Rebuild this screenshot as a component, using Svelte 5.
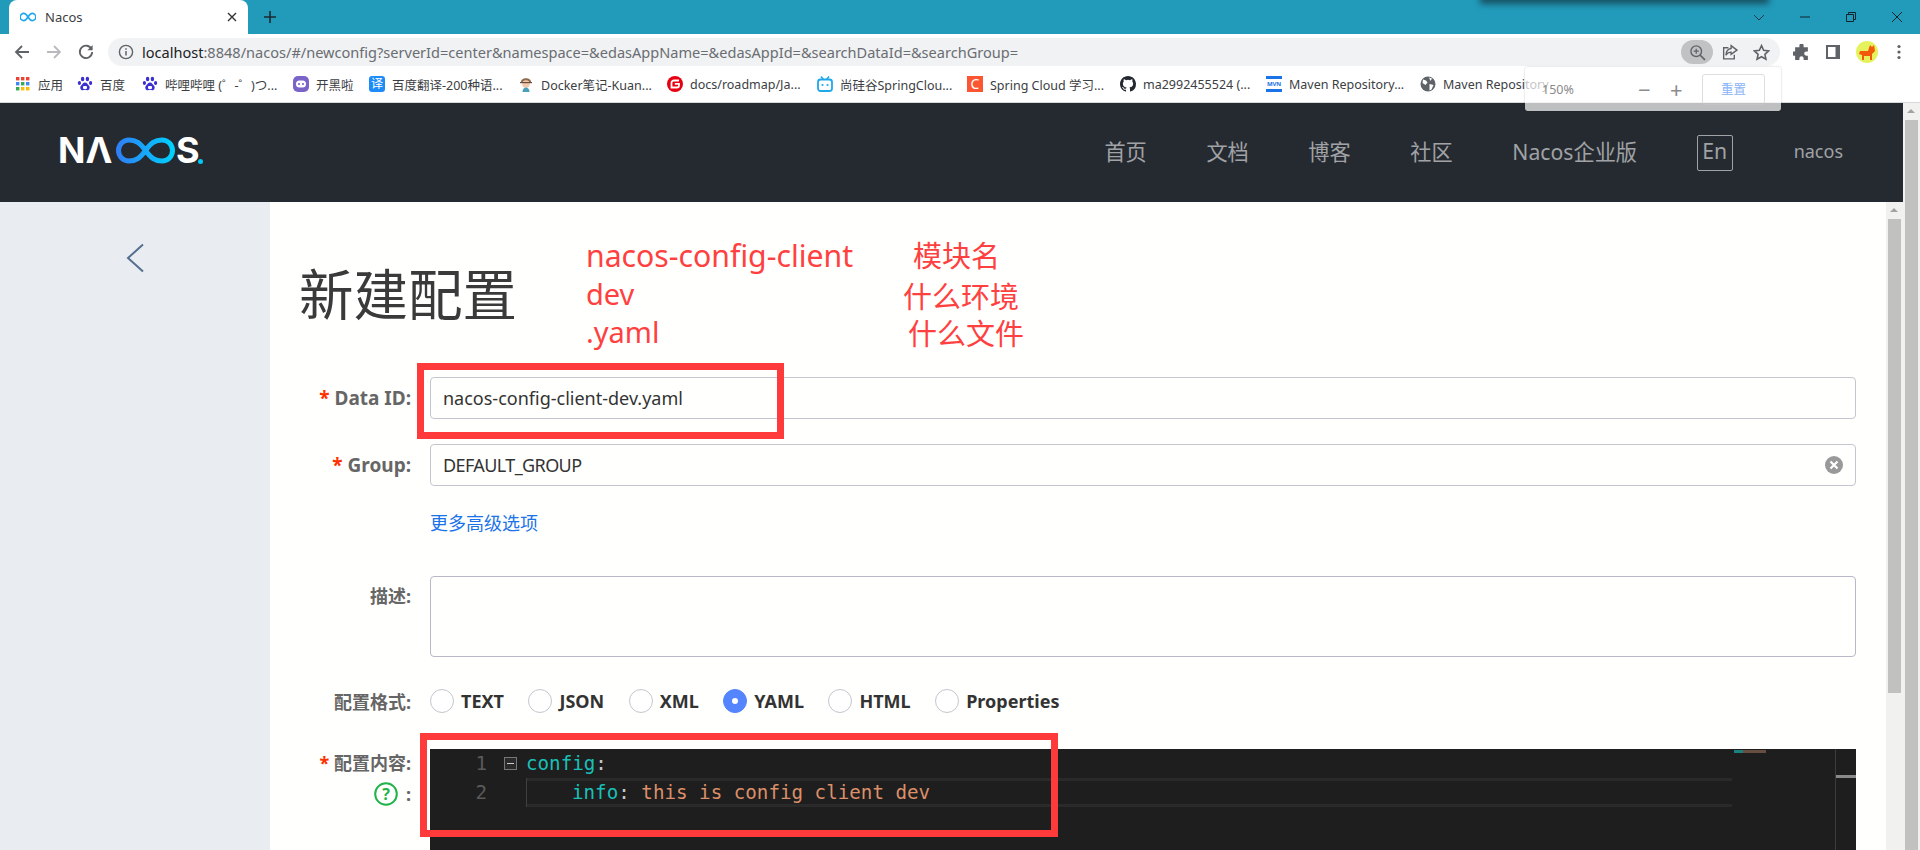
<script lang="ts">
  // bookmark bar, widths come from the truncated labels chrome shows
  const bookmarks = [
    { icon: 'apps', label: '应用', w: 62 },
    { icon: 'paw', label: '百度', w: 65 },
    { icon: 'paw', label: '哔哩哔哩 (゜-゜)つ...', w: 151 },
    { icon: 'kook', label: '开黑啦', w: 76 },
    { icon: 'fanyi', label: '百度翻译-200种语...', w: 149 },
    { icon: 'docker', label: 'Docker笔记-Kuan...', w: 149 },
    { icon: 'gitee', label: 'docs/roadmap/Ja...', w: 150 },
    { icon: 'bili', label: '尚硅谷SpringClou...', w: 150 },
    { icon: 'csdn', label: 'Spring Cloud 学习...', w: 153 },
    { icon: 'github', label: 'ma2992455524 (...', w: 146 },
    { icon: 'mvn', label: 'Maven Repository...', w: 154 },
    { icon: 'globe', label: 'Maven Repository', w: 140 },
  ]
  const nav = ['首页', '文档', '博客', '社区', 'Nacos企业版']
  const formats = ['TEXT', 'JSON', 'XML', 'YAML', 'HTML', 'Properties']
</script>

<div class="screen">
  <div class="tabstrip">
    <div class="tab">
      <svg class="tab-icon" viewBox="0 0 16 10" width="16" height="10">
        <path d="M8 5C6.5 2.6 5.4 1.4 3.8 1.4a3.6 3.6 0 0 0 0 7.2C5.4 8.6 6.5 7.4 8 5c1.5-2.4 2.6-3.6 4.2-3.6a3.6 3.6 0 0 1 0 7.2C10.6 8.6 9.5 7.4 8 5z" fill="none" stroke="#20a8ee" stroke-width="1.6" />
      </svg>
      <span class="tab-title">Nacos</span>
      <svg class="tab-close" viewBox="0 0 10 10" width="10" height="10">
        <path d="M1 1l8 8M9 1l-8 8" stroke="#333" stroke-width="1.4" />
      </svg>
    </div>
    <svg class="new-tab" viewBox="0 0 14 14" width="14" height="14">
      <path d="M7 1v12M1 7h12" stroke="#1c2a30" stroke-width="1.6" />
    </svg>
    <div class="win-controls">
      <svg viewBox="0 0 12 12" width="12" height="12"><path d="M1 4l5 5 5-5" fill="none" stroke="#1d3a45" stroke-width="1" /></svg>
      <svg viewBox="0 0 12 12" width="12" height="12"><path d="M1 6h10" stroke="#10242c" stroke-width="1" /></svg>
      <svg viewBox="0 0 12 12" width="12" height="12"><path d="M1.5 3.5h7v7h-7zM3.5 3.5v-2h7v7h-2" fill="none" stroke="#10242c" stroke-width="1" /></svg>
      <svg viewBox="0 0 12 12" width="12" height="12"><path d="M1 1l10 10M11 1L1 11" stroke="#10242c" stroke-width="1" /></svg>
    </div>
  </div>

  <div class="toolbar">
    <svg class="tool" viewBox="0 0 16 16" width="16" height="16"><path d="M15 8H2M8 2L2 8l6 6" fill="none" stroke="#5f6368" stroke-width="1.8" /></svg>
    <svg class="tool" viewBox="0 0 16 16" width="16" height="16"><path d="M1 8h13M8 2l6 6-6 6" fill="none" stroke="#b8babd" stroke-width="1.8" /></svg>
    <svg class="tool" viewBox="0 0 16 16" width="16" height="16"><path d="M13.6 5.2A6.2 6.2 0 1 0 14.2 8" fill="none" stroke="#5f6368" stroke-width="1.8" /><path d="M14.6 1v5.2H9.4z" fill="#5f6368" /></svg>
    <div class="omnibox">
      <svg class="info" viewBox="0 0 16 16" width="16" height="16"><circle cx="8" cy="8" r="6.6" fill="none" stroke="#5f6368" stroke-width="1.4" /><path d="M8 7v4.6M8 4.2v1.5" stroke="#5f6368" stroke-width="1.5" /></svg>
      <span class="url"><b>localhost</b>:8848/nacos/#/newconfig?serverId=center&amp;namespace=&amp;edasAppName=&amp;edasAppId=&amp;searchDataId=&amp;searchGroup=</span>
      <div class="omni-actions">
        <span class="zoom-btn">
          <svg viewBox="0 0 16 16" width="17" height="17"><circle cx="6.8" cy="6.8" r="5" fill="none" stroke="#5f6368" stroke-width="1.3" /><path d="M10.6 10.6L15 15" stroke="#5f6368" stroke-width="1.6" /><path d="M6.8 4.4v4.8M4.4 6.8h4.8" stroke="#5f6368" stroke-width="1.2" /></svg>
        </span>
        <svg viewBox="0 0 16 16" width="17" height="17"><path d="M7 3.5H2.5v10.5h10V10" fill="none" stroke="#5f6368" stroke-width="1.3" /><path d="M9.5 1.5L15 5.8l-5.5 4V7.6C7.3 7.6 5.6 8.6 4.6 10.6c.2-3.6 2-6 4.9-6.4z" fill="none" stroke="#5f6368" stroke-width="1.3" /></svg>
        <svg viewBox="0 0 16 16" width="17" height="17"><path d="M8 1.6l2 4.4 4.7.5-3.5 3.2 1 4.7L8 12l-4.2 2.4 1-4.7-3.5-3.2L6 6z" fill="none" stroke="#5f6368" stroke-width="1.5" /></svg>
      </div>
    </div>
    <div class="browser-actions">
      <svg viewBox="0 0 16 16" width="17" height="17"><path d="M6 1.5a2 2 0 0 1 4 0V3h4v4h-1.500a2 2 0 0 0 0 4H14v4h-4v-1.500a2 2 0 0 0-4 0V15H2v-4H.8a2 2 0 0 1 0-4H2V3h4z" fill="#5f6368" /></svg>
      <svg viewBox="0 0 16 16" width="16" height="16"><rect x="1" y="1" width="14" height="14" fill="#5f6368" /><rect x="3" y="3" width="7.500" height="10" fill="#fff" /></svg>
      <span class="avatar">
        <svg viewBox="0 0 22 22" width="22" height="22"><path d="M4 10h8l2-6 2 2 2-2 1 6-3 3v6h-2v-4H8v4H6v-5L3 13z" fill="#f05a0a" /></svg>
      </span>
      <svg class="menu-dots" viewBox="0 0 4 16" width="4" height="16"><circle cx="2" cy="2.500" r="1.600" fill="#5f6368" /><circle cx="2" cy="8" r="1.600" fill="#5f6368" /><circle cx="2" cy="13.500" r="1.600" fill="#5f6368" /></svg>
    </div>
  </div>

  <div class="bookmarks">
    {#each bookmarks as b}
      <div class="bookmark" style="width: {b.w}px">
        <span class="bm-icon">
          {#if b.icon === 'apps'}
            <svg viewBox="0 0 14 14" width="14" height="14">
              <rect x="0" y="0" width="3.400" height="3.400" fill="#ea4335" /><rect x="5" y="0" width="3.400" height="3.400" fill="#ea4335" /><rect x="10" y="0" width="3.400" height="3.400" fill="#ea4335" />
              <rect x="0" y="5" width="3.400" height="3.400" fill="#4285f4" /><rect x="5" y="5" width="3.400" height="3.400" fill="#34a853" /><rect x="10" y="5" width="3.400" height="3.400" fill="#4285f4" />
              <rect x="0" y="10" width="3.400" height="3.400" fill="#34a853" /><rect x="5" y="10" width="3.400" height="3.400" fill="#fbbc05" /><rect x="10" y="10" width="3.400" height="3.400" fill="#fbbc05" />
            </svg>
          {:else if b.icon === 'paw'}
            <svg viewBox="0 0 16 16" width="16" height="16">
              <ellipse cx="5.600" cy="3" rx="1.700" ry="2.300" fill="#3b2fd0" /><ellipse cx="10.400" cy="3" rx="1.700" ry="2.300" fill="#3b2fd0" />
              <ellipse cx="2.400" cy="7" rx="1.600" ry="2" fill="#3b2fd0" /><ellipse cx="13.600" cy="7" rx="1.600" ry="2" fill="#3b2fd0" />
              <path d="M8 6.500c2 0 2.800 2 4 3.200 1.400 1.500.6 4.800-2 4.500-1-.1-1.400-.4-2-.4s-1 .3-2 .4c-2.600.3-3.400-3-2-4.500C5.200 8.500 6 6.500 8 6.500z" fill="#3b2fd0" />
              <rect x="6" y="10" width="4" height="3" rx="1" fill="#fff" />
            </svg>
          {:else if b.icon === 'kook'}
            <svg viewBox="0 0 16 16" width="16" height="16"><rect width="16" height="16" rx="5" fill="#7a64c8" /><rect x="3" y="4.500" width="10" height="7" rx="3.500" fill="#fff" /><circle cx="6" cy="8" r="1.100" fill="#7a64c8" /><circle cx="10" cy="8" r="1.100" fill="#7a64c8" /></svg>
          {:else if b.icon === 'fanyi'}
            <span class="bm-fanyi">译</span>
          {:else if b.icon === 'docker'}
            <svg viewBox="0 0 16 16" width="16" height="16"><path d="M3 6c0-5 10-5 10 0z" fill="#8a6a50" /><circle cx="8" cy="8" r="3.800" fill="#f2c8a8" /><path d="M4.500 16c0-3 1.500-4.500 3.500-4.500s3.500 1.500 3.500 4.500z" fill="#4aa0b8" /><path d="M2 6h12v1.200H2z" fill="#6a4c38" /></svg>
          {:else if b.icon === 'gitee'}
            <svg viewBox="0 0 16 16" width="16" height="16"><circle cx="8" cy="8" r="8" fill="#e60012" /><path d="M12 4.500H7a2.500 2.500 0 0 0-2.500 2.500v4.500H10a2 2 0 0 0 2-2V7.800H7.800" fill="none" stroke="#fff" stroke-width="1.800" /></svg>
          {:else if b.icon === 'bili'}
            <svg viewBox="0 0 16 16" width="16" height="16"><rect x="1" y="3.500" width="14" height="11.500" rx="2.500" fill="none" stroke="#20a8e8" stroke-width="1.800" /><path d="M4 0.500l2.500 3M12 0.500l-2.500 3" stroke="#20a8e8" stroke-width="1.600" /><circle cx="5.500" cy="9" r="1.100" fill="#20a8e8" /><circle cx="10.500" cy="9" r="1.100" fill="#20a8e8" /></svg>
          {:else if b.icon === 'csdn'}
            <span class="bm-csdn">C</span>
          {:else if b.icon === 'github'}
            <svg viewBox="0 0 16 16" width="16" height="16"><path fill="#24292f" d="M8 0C3.580 0 0 3.580 0 8c0 3.540 2.290 6.530 5.470 7.590.4.070.55-.17.55-.38 0-.19-.01-.82-.01-1.490-2.010.37-2.530-.49-2.690-.94-.09-.23-.48-.94-.82-1.130-.28-.15-.68-.52-.01-.53.63-.01 1.080.58 1.230.82.720 1.210 1.870.87 2.330.66.070-.52.280-.87.510-1.070-1.780-.2-3.640-.89-3.640-3.950 0-.87.310-1.590.82-2.150-.08-.2-.36-1.020.08-2.120 0 0 .67-.21 2.200.82a7.420 7.420 0 0 1 4 0c1.530-1.040 2.200-.82 2.200-.82.440 1.100.16 1.920.08 2.120.51.560.82 1.270.82 2.150 0 3.070-1.870 3.750-3.650 3.950.29.250.54.730.54 1.480 0 1.070-.01 1.930-.01 2.200 0 .21.150.46.550.38A8.010 8.010 0 0 0 16 8c0-4.420-3.580-8-8-8z" /></svg>
          {:else if b.icon === 'mvn'}
            <span class="bm-mvn">MVN</span>
          {:else}
            <svg viewBox="0 0 16 16" width="16" height="16"><circle cx="8" cy="8" r="7.500" fill="#5f6368" /><path d="M3 3.500l3 1 1.500 2-2 2.500-3-2zM9 1.500l3 1-1.500 2.500zM9.500 8l4 1-2 4.500-2 1z" fill="#fff" /></svg>
          {/if}
        </span>
        <span class="bm-label">{b.label}</span>
      </div>
    {/each}
  </div>

  <div class="viewport">
    <div class="page">
      <header class="site-header">
        <div class="logo">
          <span class="logo-text">NΛ</span>
          <svg class="logo-loop" viewBox="0 0 63 27" width="63" height="27">
            <defs>
              <linearGradient id="loopgrad" x1="0" x2="1" y1="0" y2="0">
                <stop offset="0" stop-color="#2e80f5" />
                <stop offset="1" stop-color="#00d0ff" />
              </linearGradient>
            </defs>
            <path d="M31.500 13.500C26 6 22 3 15 3a10.500 10.500 0 0 0 0 21c7 0 11-3 16.500-10.500C37 6 41 3 48 3a10.500 10.500 0 0 1 0 21c-7 0-11-3-16.500-10.500z" fill="none" stroke="url(#loopgrad)" stroke-width="5" />
          </svg>
          <span class="logo-text logo-s">S</span><span class="logo-dot"></span>
        </div>
        <nav class="site-nav">
          {#each nav as item}
            <span class="nav-item">{item}</span>
          {/each}
          <span class="lang">En</span>
          <span class="user">nacos</span>
        </nav>
      </header>

      <div class="body-row">
        <aside class="sidebar">
          <svg viewBox="0 0 18 30" width="18" height="30"><path d="M17 1.500L2 15l15 13.500" fill="none" stroke="#546f8f" stroke-width="2" /></svg>
        </aside>

        <main class="content">
          <h1>新建配置</h1>
          <form class="form" on:submit|preventDefault>
            <div class="row row--input">
              <span class="label label--latin"><i>*</i> Data ID:</span>
              <div class="input">nacos-config-client-dev.yaml</div>
            </div>
            <div class="row row--input">
              <span class="label label--latin"><i>*</i> Group:</span>
              <div class="input">
                <span class="group-value">DEFAULT_GROUP</span>
                <svg class="clear" viewBox="0 0 18 18" width="18" height="18"><circle cx="9" cy="9" r="9" fill="#999" /><path d="M5.500 5.500l7 7M12.500 5.500l-7 7" stroke="#fff" stroke-width="2.200" /></svg>
              </div>
            </div>
            <div class="row row--more">
              <span class="label"></span>
              <span class="more-link">更多高级选项</span>
            </div>
            <div class="row row--desc">
              <span class="label">描述:</span>
              <div class="textarea"></div>
            </div>
            <div class="row row--format">
              <span class="label">配置格式:</span>
              <div class="radios">
                {#each formats as f}
                  <span class="radio-item">
                    <span class="radio" class:radio--on={f === 'YAML'}></span>
                    <span class="radio-text">{f}</span>
                  </span>
                {/each}
              </div>
            </div>
            <div class="row row--editor">
              <div class="label label--stack">
                <span><i>*</i> 配置内容:</span>
                <span class="help">
                  <svg viewBox="0 0 24 24" width="24" height="24"><circle cx="12" cy="12" r="10.800" fill="none" stroke="#1fb34a" stroke-width="2" /><text x="12" y="17.500" text-anchor="middle" class="help-q">?</text></svg>
                  :
                </span>
              </div>
              <div class="editor">
                <div class="gutter">
                  <div class="gutter-line"><span class="ln">1</span><span class="fold"></span></div>
                  <div class="gutter-line"><span class="ln">2</span></div>
                </div>
                <div class="code">
                  <div class="code-line"><span class="key">config</span><span class="punc">:</span></div>
                  <div class="code-line code-line--second"><span class="guide"></span><span class="key">info</span><span class="punc">:</span> <span class="val">this is config client dev</span></div>
                </div>
                <div class="minimap">
                  <span class="mini-slider"></span>
                </div>
              </div>
            </div>
          </form>
        </main>

        <div class="scrollbar scrollbar--inner">
          <span class="sb-arrow"></span>
          <span class="sb-thumb"></span>
        </div>
      </div>
    </div>

    <div class="scrollbar scrollbar--outer">
      <span class="sb-arrow"></span>
      <span class="sb-thumb sb-thumb--outer"></span>
    </div>
  </div>

  <!-- things lying on top of the page -->
  <div class="top-shadow"></div>
  <div class="zoom-popup">
    <span class="zoom-value">150%</span>
    <span class="zoom-sign zoom-minus">−</span>
    <span class="zoom-sign zoom-plus">+</span>
    <span class="zoom-reset">重置</span>
  </div>

  <div class="note note--left"><span class="note-first">nacos-config-client</span><br />dev<br />.yaml</div>
  <div class="note note--a">模块名</div>
  <div class="note note--b">什么环境</div>
  <div class="note note--c">什么文件</div>
  <div class="mark mark--id"></div>
  <div class="mark mark--code"></div>
  <div class="mini-text"></div>
</div>

<style>
  :global(body) {
    margin: 0;
    overflow: hidden;
  }
  .screen {
    position: relative;
    width: 1920px;
    height: 850px;
    overflow: hidden;
    font-family: 'Noto Sans', 'Noto Sans CJK SC', sans-serif;
    background: #fff;
  }
  .tabstrip {
    height: 34px;
    background: #229bbb;
    display: flex;
    align-items: flex-end;
    padding-left: 9px;
    position: relative;
  }
  .tab {
    width: 239px;
    height: 34px;
    box-sizing: border-box;
    background: #fff;
    border-radius: 8px 8px 0 0;
    display: flex;
    align-items: center;
    padding: 0 11px;
  }
  .tab-icon {
    margin-right: 9px;
  }
  .tab-title {
    font-size: 13px;
    color: #3c4043;
    flex: 1;
  }
  .new-tab {
    margin: 0 0 10px 15px;
  }
  .win-controls {
    margin-left: auto;
    display: flex;
    gap: 34px;
    align-self: center;
    padding-right: 17px;
  }
  .win-controls svg {
    display: block;
  }
  .toolbar {
    height: 32px;
    padding: 4px 0 0 14px;
    display: flex;
    align-items: center;
    gap: 16px;
    box-sizing: border-box;
    background: #fff;
  }
  .tool {
    flex: none;
  }
  .omnibox {
    margin-left: -2px;
    width: 1672px;
    flex: none;
    height: 28px;
    box-sizing: border-box;
    background: #f0f2f4;
    border-radius: 14px;
    display: flex;
    align-items: center;
    padding: 0 2px 0 10px;
  }
  .info {
    margin-right: 8px;
    flex: none;
  }
  .url {
    font-size: 14.560px;
    color: #6a6d71;
    white-space: nowrap;
    flex: 1;
  }
  .url b {
    font-weight: 400;
    color: #202124;
  }
  .omni-actions {
    display: flex;
    align-items: center;
    gap: 15px;
    padding-right: 8px;
  }
  .zoom-btn {
    width: 32px;
    height: 24px;
    border-radius: 12px;
    background: #c1c2c3;
    display: flex;
    align-items: center;
    justify-content: center;
    margin-right: -7px;
  }
  .browser-actions {
    display: flex;
    align-items: center;
    gap: 15px;
    margin-left: -3px;
  }
  .menu-dots {
    margin-left: 4px;
  }
  .avatar {
    width: 22px;
    height: 22px;
    border-radius: 50%;
    background: #e6f25c;
    display: block;
  }
  .avatar svg {
    display: block;
  }
  .browser-actions svg {
    flex: none;
  }
  .bookmarks {
    height: 36px;
    border-bottom: 1px solid #d6d7d8;
    box-sizing: content-box;
    display: flex;
    align-items: center;
    padding-left: 15px;
    background: #fff;
  }
  .bookmark {
    display: flex;
    align-items: center;
    gap: 7px;
    flex: none;
    white-space: nowrap;
  }
  .bm-icon {
    width: 16px;
    height: 16px;
    flex: none;
    display: flex;
    align-items: center;
    justify-content: center;
  }
  .bm-label {
    font-size: 12.500px;
    color: #3c4043;
  }
  .bm-fanyi {
    width: 16px;
    height: 16px;
    border-radius: 3px;
    background: #1d8cf8;
    color: #fff;
    font-size: 12px;
    line-height: 16px;
    text-align: center;
  }
  .bm-csdn {
    width: 16px;
    height: 16px;
    background: #fc5531;
    color: #fff;
    font-size: 14px;
    line-height: 16px;
    text-align: center;
  }
  .bm-mvn {
    width: 16px;
    height: 16px;
    box-sizing: border-box;
    border-top: 3px solid #1a73e8;
    border-bottom: 3px solid #1a73e8;
    color: #1a73e8;
    font-size: 6px;
    font-weight: 700;
    line-height: 10px;
    text-align: center;
    letter-spacing: -0.2px;
  }

  .viewport {
    display: flex;
    height: 747px;
  }
  .page {
    width: 1903px;
    flex: none;
    display: flex;
    flex-direction: column;
  }
  .site-header {
    height: 99px;
    flex: none;
    background: #252a31;
    display: flex;
    align-items: center;
    justify-content: space-between;
    padding: 0 60px;
    box-sizing: border-box;
  }
  .logo {
    display: flex;
    align-items: center;
    color: #fff;
    height: 27px;
    margin-bottom: 5px;
    margin-left: -2px;
  }
  .logo-text {
    font-family: Inter, 'Noto Sans', sans-serif;
    font-size: 36px;
    font-weight: 700;
    line-height: 27px;
    width: 56px;
    white-space: nowrap;
  }
  .logo-s {
    width: 22px;
  }
  .logo-loop {
    flex: none;
    margin-right: -1px;
  }
  .logo-dot {
    width: 5px;
    height: 5px;
    border-radius: 50%;
    background: #00c8f5;
    align-self: flex-end;
  }
  .site-nav {
    display: flex;
    align-items: center;
    font-size: 21.200px;
    color: #a0a2a5;
  }
  .nav-item {
    margin-right: 59.600px;
    margin-bottom: 4px;
  }
  .lang {
    width: 36px;
    height: 36px;
    box-sizing: border-box;
    border: 1px solid #a0a2a5;
    border-radius: 2px;
    text-align: center;
    line-height: 30px;
    margin-right: 61px;
  }
  .user {
    font-size: 18px;
    margin-bottom: 4px;
  }

  .body-row {
    flex: 1;
    display: flex;
    min-height: 0;
  }
  .sidebar {
    width: 270px;
    flex: none;
    background: #e9edf1;
    box-sizing: border-box;
    padding: 41px 0 0 126px;
  }
  .sidebar svg {
    display: block;
  }
  .content {
    width: 1616px;
    flex: none;
    background: #fffffd;
    box-sizing: border-box;
    padding: 0 30px 0 30px;
    overflow: hidden;
  }
  h1 {
    margin: 54px 0 0 -1px;
    width: max-content;
    height: 72px;
    font-size: 54.500px;
    line-height: 72px;
    font-weight: 400;
    color: #3a3a3a;
    font-family: 'Noto Sans CJK SC', sans-serif;
  }
  .form {
    margin-top: 49px;
  }
  .row {
    display: flex;
    align-items: center;
  }
  .label {
    width: 111px;
    margin-right: 19px;
    flex: none;
    text-align: right;
    font-size: 18px;
    font-weight: 700;
    color: #666;
    white-space: nowrap;
  }
  .label--latin {
    font-size: 19px;
  }
  .label i {
    font-style: normal;
    color: #ff3000;
    margin-right: 0;
  }
  .row--input {
    margin-bottom: 25px;
  }
  .input {
    flex: 1;
    height: 42px;
    box-sizing: border-box;
    border: 1px solid #c4c6cf;
    border-radius: 4px;
    padding: 0 12px 0 12px;
    font-size: 18px;
    line-height: 40px;
    color: #333;
    display: flex;
    justify-content: space-between;
    align-items: center;
  }
  .group-value {
    letter-spacing: -0.6px;
  }
  .clear {
    margin-right: 0;
  }
  .row--more {
    height: 26px;
    margin: -2.400px 0 0;
  }
  .more-link {
    font-size: 18px;
    color: #1a73e8;
  }
  .row--desc {
    margin-top: 41px;
    align-items: flex-start;
  }
  .row--desc .label {
    margin-top: 6.500px;
  }
  .textarea {
    flex: 1;
    height: 81px;
    box-sizing: border-box;
    border: 1px solid #b8b8c8;
    border-radius: 4px;
  }
  .row--format {
    margin-top: 32px;
    height: 24px;
  }
  .radios {
    display: flex;
  }
  .radio-item {
    display: flex;
    align-items: center;
    margin-right: 24.500px;
    gap: 7px;
  }
  .radio {
    width: 24px;
    height: 24px;
    box-sizing: border-box;
    border: 1px solid #c4c6cf;
    border-radius: 50%;
    background: #fff;
    position: relative;
    flex: none;
  }
  .radio--on {
    background: #5584ff;
    border-color: #5584ff;
  }
  .radio--on::after {
    content: '';
    position: absolute;
    left: 8px;
    top: 8px;
    width: 6px;
    height: 6px;
    border-radius: 50%;
    background: #fff;
  }
  .radio-text {
    font-size: 18px;
    font-weight: 700;
    color: #333;
  }
  .row--editor {
    margin-top: 36px;
    align-items: flex-start;
  }
  .label--stack {
    display: flex;
    flex-direction: column;
    align-items: flex-end;
    gap: 6px;
  }
  .help {
    display: flex;
    align-items: center;
    gap: 8px;
    height: 26px;
  }
  .help svg {
    display: block;
  }
  .help-q {
    font-size: 16px;
    font-weight: 700;
    fill: #1fb34a;
    font-family: 'Noto Sans', sans-serif;
  }
  .editor {
    flex: 1;
    height: 200px;
    background: #1e1e1e;
    display: flex;
    font-family: 'DejaVu Sans Mono', monospace;
    font-size: 19.200px;
    line-height: 29px;
  }
  .gutter {
    width: 96px;
    flex: none;
  }
  .gutter-line {
    height: 29px;
    display: flex;
    align-items: center;
    color: #5a5a5a;
  }
  .ln {
    width: 57px;
    text-align: right;
    margin-right: 17px;
  }
  .fold {
    width: 13px;
    height: 13px;
    box-sizing: border-box;
    border: 1px solid #777;
    position: relative;
    background: #2a2a2a;
  }
  .fold::after {
    content: '';
    position: absolute;
    left: 2px;
    right: 2px;
    top: 5px;
    height: 1px;
    background: #ccc;
  }
  .code {
    flex: 1;
    position: relative;
  }
  .code-line {
    height: 29px;
    width: 1206px;
    color: #d4d4d4;
    white-space: pre;
  }
  .code-line--second {
    position: relative;
    padding-left: 46px;
    box-sizing: border-box;
    border-top: 3px solid #2a2a2a;
    border-bottom: 3px solid #2a2a2a;
    line-height: 23px;
  }
  .guide {
    position: absolute;
    left: 0;
    top: -3px;
    bottom: -3px;
    width: 1px;
    background: #404040;
  }
  .key {
    color: #1ac0b8;
  }
  .punc {
    color: #c8c8c8;
  }
  .val {
    color: #dc8f68;
  }
  .minimap {
    width: 21px;
    flex: none;
    box-sizing: border-box;
    border-left: 1px solid #3c3c3c;
    position: relative;
  }
  .mini-slider {
    position: absolute;
    left: 0;
    right: 0;
    top: 26px;
    height: 3px;
    background: #8a8a8a;
  }

  .scrollbar {
    background: #f1f1f0;
    flex: none;
    display: flex;
    flex-direction: column;
    align-items: center;
  }
  .scrollbar--inner {
    width: 17px;
  }
  .scrollbar--outer {
    width: 17px;
  }
  .sb-arrow {
    height: 17px;
    width: 17px;
    flex: none;
    position: relative;
  }
  .sb-arrow::after {
    content: '';
    position: absolute;
    left: 4px;
    top: 6px;
    border-left: 4px solid transparent;
    border-right: 4px solid transparent;
    border-bottom: 4px solid #a3a3a3;
  }
  .sb-thumb {
    width: 13px;
    height: 474px;
    background: #c1c1bf;
    flex: none;
  }
  .sb-thumb--outer {
    height: auto;
    flex: 1;
  }

  .top-shadow {
    position: absolute;
    left: 1483px;
    top: -4px;
    width: 283px;
    height: 4px;
    box-shadow: 0 1px 6px 3px rgba(20, 50, 60, 0.7);
    background: #1c5a6c;
  }
  .zoom-popup {
    position: absolute;
    left: 1525px;
    top: 67px;
    width: 256px;
    height: 44px;
    box-sizing: border-box;
    background: rgba(255, 255, 255, 0.7);
    border-radius: 3px;
    box-shadow: 0 0 2px rgba(0, 0, 0, 0.25);
  }
  .zoom-value {
    position: absolute;
    left: 17px;
    top: 14px;
    font-size: 12.500px;
    color: #8a8a8a;
  }
  .zoom-sign {
    position: absolute;
    top: 7px;
    font-size: 22px;
    line-height: 30px;
    color: #8a8c8e;
  }
  .zoom-minus {
    left: 113px;
  }
  .zoom-plus {
    left: 145px;
  }
  .zoom-reset {
    position: absolute;
    left: 177px;
    top: 7px;
    width: 63px;
    height: 31px;
    box-sizing: border-box;
    border: 1px solid rgba(200, 200, 200, 0.6);
    border-radius: 3px;
    text-align: center;
    font-size: 12.500px;
    line-height: 29px;
    color: #8ab4f8;
  }

  .note {
    position: absolute;
    color: #ff4040;
    font-family: 'Noto Sans CJK SC', sans-serif;
    font-size: 29px;
    line-height: 38px;
    white-space: nowrap;
  }
  .note--left {
    left: 586px;
    top: 237px;
    font-family: 'Noto Sans', 'Noto Sans CJK SC', sans-serif;
  }
  .note-first {
    font-size: 30.200px;
  }
  .note--a {
    left: 913px;
    top: 235px;
  }
  .note--b {
    left: 903px;
    top: 276px;
  }
  .note--c {
    left: 908px;
    top: 313px;
  }
  .mark {
    position: absolute;
    box-sizing: border-box;
    border: 7px solid #ff3a3a;
  }
  .mark--id {
    left: 417px;
    top: 363px;
    width: 367px;
    height: 76px;
  }
  .mark--code {
    left: 420px;
    top: 733px;
    width: 638px;
    height: 104px;
  }
  .mini-text {
    position: absolute;
    left: 1734px;
    top: 750px;
    width: 32px;
    height: 3px;
    background: linear-gradient(90deg, #1a9a94 0 28%, #7a5a48 28% 100%);
    opacity: 0.8;
  }
</style>
